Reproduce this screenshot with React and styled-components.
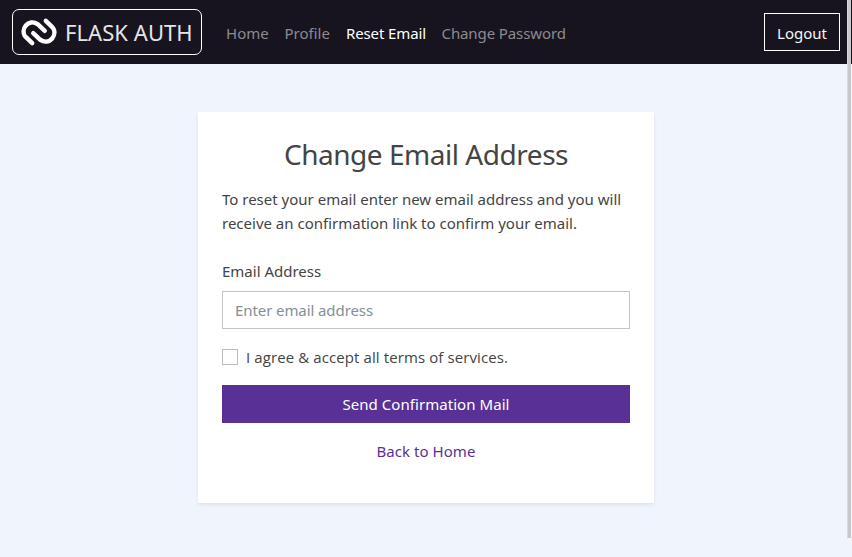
import React from "react";
import styled, { createGlobalStyle } from "styled-components";

const GlobalStyle = createGlobalStyle`
  *, *::before, *::after { box-sizing: border-box; }
  body {
    margin: 0;
    background: #f0f4fd;
    color: #444;
    font: 15px/24px "Noto Sans", "Open Sans", sans-serif;
    overflow: hidden;
  }
`;

const Page = styled.div`
  height: 100vh;
`;

const Navbar = styled.nav`
  display: flex;
  align-items: center;
  height: 64px;
  padding: 0 12px;
  background: #18141f;
`;

const Brand = styled.a`
  display: flex;
  align-items: center;
  width: 190px;
  height: 46px;
  margin-right: 16px;
  padding: 0 0 0 7px;
  border: 1px solid #fff;
  border-radius: 7px;
  color: #e6e6e8;
  font-size: 22px;
  line-height: 44px;
  letter-spacing: 0.06px;
  white-space: nowrap;
`;

const BrandMark = styled.svg`
  width: 38px;
  height: 30px;
  margin-right: 7px;
  flex: none;
`;

const NavLinks = styled.div`
  display: flex;
  flex: 1;
`;

const NavLink = styled.a`
  width: ${(p) => p.$width}px;
  padding: 2px 8px 0;
  color: ${(p) => (p.$active ? "#fff" : "#8d8a91")};
  letter-spacing: ${(p) => p.$tracking || 0}px;
  white-space: nowrap;
`;

const LogoutButton = styled.button`
  width: 76px;
  height: 38px;
  padding: 1px 0 0;
  border: 1px solid #fff;
  background: transparent;
  color: #f6f6f7;
  font: inherit;
`;

const Card = styled.main`
  width: 456px;
  height: 391px;
  margin: 48px auto 0;
  padding: 24px;
  background: #fff;
  box-shadow: 0 2px 4px rgba(0, 0, 0, 0.075);
`;

const Title = styled.h1`
  margin: 0 0 16px;
  font-size: 28px;
  font-weight: 400;
  line-height: 36px;
  height: 35px;
  letter-spacing: -0.47px;
  text-align: center;
`;

const Intro = styled.p`
  margin: 0 0 24px;
  white-space: nowrap;
`;

const Label = styled.label`
  display: block;
  margin-bottom: 8px;
`;

const EmailInput = styled.input`
  display: block;
  width: 100%;
  height: 38px;
  margin-bottom: 16px;
  padding: 0 12px;
  border: 1px solid #c2c5c5;
  border-radius: 0;
  outline: 0;
  background: #fff;
  color: #444;
  font: inherit;
  letter-spacing: -0.09px;

  &::placeholder {
    color: #849097;
    opacity: 1;
  }
`;

const Agreement = styled.label`
  display: flex;
  align-items: center;
  gap: 8px;
  height: 24px;
  margin-bottom: 16px;
  font-family: "Open Sans", "Noto Sans", sans-serif;
  letter-spacing: 0.1px;
`;

const Checkbox = styled.input`
  appearance: none;
  width: 16px;
  height: 16px;
  margin: 0;
  border: 1px solid #bcbcbc;
  background: #fff;
`;

const SubmitButton = styled.button`
  display: block;
  width: 100%;
  height: 38px;
  margin-bottom: 16px;
  padding: 0;
  border: 0;
  background: #593196;
  color: #fff;
  font: inherit;
  letter-spacing: 0.05px;
`;

const BackLink = styled.a`
  display: block;
  color: #593196;
  letter-spacing: 0.05px;
  text-align: center;
`;

const ScrollThumb = styled.div`
  position: absolute;
  top: 0;
  right: 1px;
  width: 4px;
  height: 538px;
  background: #c8c8c8;
  border-left: 1px solid #dadada;
`;

const LINKS = [
  { label: "Home", width: 58.5, tracking: 0.05 },
  { label: "Profile", width: 61.5 },
  { label: "Reset Email", width: 95.5, tracking: -0.12, active: true },
  { label: "Change Password", width: 141, tracking: -0.1 },
];

export default function App() {
  return (
    <Page>
      <GlobalStyle />
      <Navbar>
        <Brand>
          <BrandMark viewBox="0 0 38 30" fill="none" stroke="#fff" strokeWidth="4.4" strokeLinecap="round">
            <path d="M12.2 26.2 L6 20.2 C-1 13 8.5 0.5 18 7.4 L24.8 13.8" />
            <path d="M25.8 3.8 L32 9.8 C39 17 29.5 29.5 20 22.6 L13.2 16.2" />
          </BrandMark>
          FLASK AUTH
        </Brand>
        <NavLinks>
          {LINKS.map((l) => (
            <NavLink key={l.label} $width={l.width} $tracking={l.tracking} $active={l.active}>
              {l.label}
            </NavLink>
          ))}
        </NavLinks>
        <LogoutButton>Logout</LogoutButton>
      </Navbar>
      <Card>
        <Title>Change Email Address</Title>
        <Intro>
          To reset your email enter new email address and you will
          <br />
          receive an confirmation link to confirm your email.
        </Intro>
        <Label htmlFor="email">Email Address</Label>
        <EmailInput id="email" type="email" placeholder="Enter email address" />
        <Agreement>
          <Checkbox type="checkbox" />
          I agree &amp; accept all terms of services.
        </Agreement>
        <SubmitButton>Send Confirmation Mail</SubmitButton>
        <BackLink>Back to Home</BackLink>
      </Card>
      <ScrollThumb />
    </Page>
  );
}
